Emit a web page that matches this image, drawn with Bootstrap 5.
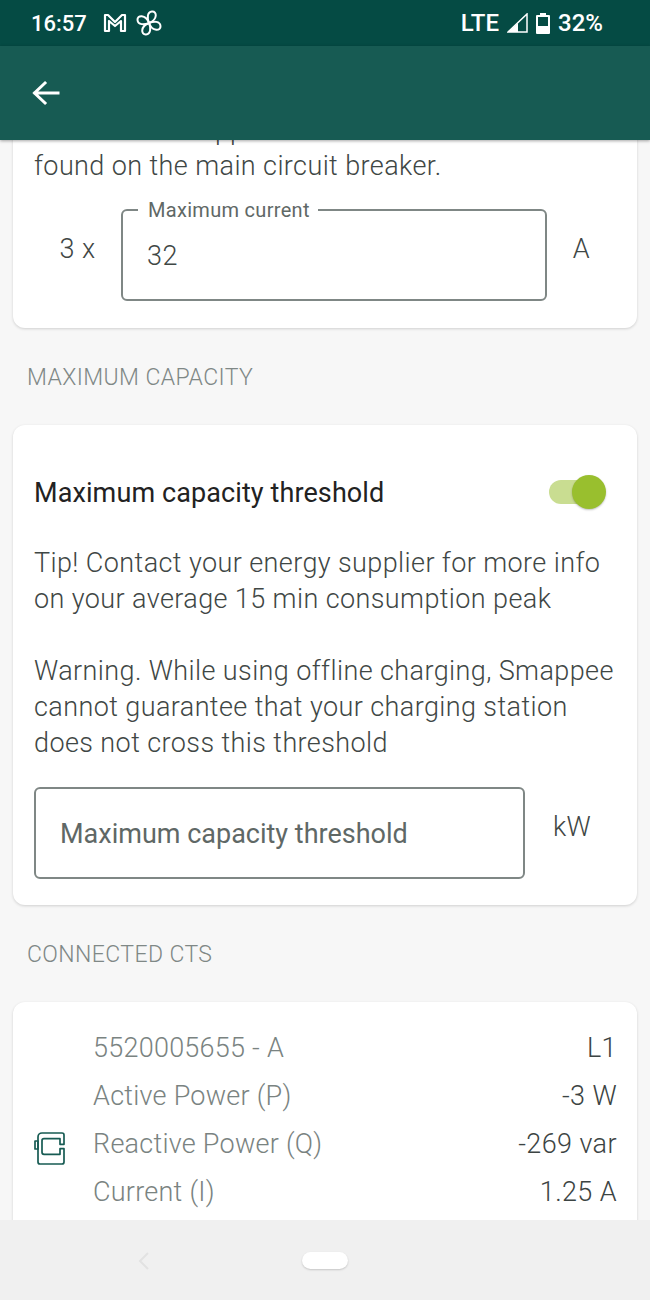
<!DOCTYPE html>
<html lang="en">
<head>
<meta charset="utf-8">
<title>Settings</title>
<link rel="stylesheet" href="https://cdn.jsdelivr.net/npm/bootstrap@5.3.0/dist/css/bootstrap.min.css">
<style>
html,body{height:1300px;overflow:hidden}
body{background:#f7f7f7;font-family:Roboto,"Liberation Sans",sans-serif;font-weight:300;letter-spacing:.4px;color:#3c4443}
.phone{height:1300px}
.status-strip{height:46px;background:#054b44;color:#fff;font-size:22px;font-weight:500;letter-spacing:0;padding:0 47px 0 31px}
.status-right{font-size:24px}
.app-strip{height:94px;background:#175b53;padding-left:32px;box-shadow:0 1px 3px rgba(0,0,0,.35);z-index:2}
.scroller{overflow:hidden;min-height:0}
.panel{background:#fff;border-radius:12px;margin:0 13px;box-shadow:0 1px 3px rgba(0,0,0,.16)}
.panel-one{height:251px;margin-top:-63px;padding:35px 21px 0}
.clipped-line{letter-spacing:.1px}
.body-line{font-size:27px;line-height:36px;margin:0;color:#3f4745;white-space:nowrap}
.head-line{font-weight:400;letter-spacing:.1px;color:#222}
.sect-title{font-size:23px;font-weight:300;line-height:30px;color:#7f8886;margin:0;padding:35px 27px 32px}
.unit{font-size:27px;color:#3f4745}
.outlined{border:2px solid #7f8785;border-radius:6px;height:92px;font-size:27px;color:#3f4745;padding-top:2px}
.hint-text{font-weight:400;letter-spacing:0;color:#5f6866}
.outlined-label{position:absolute;left:15px;top:-13px;background:#fff;padding:0 8px 0 10px;font-size:20px;font-weight:400;letter-spacing:.3px;line-height:24px;color:#5f6866}
.panel-two{height:480px;padding:0 21px}
.head-row{height:120px;padding-top:16px}
.sw-track{width:56px;height:24px;border-radius:12px;background:#c9dd91;position:relative;margin:-2px 11px 0 0}
.sw-knob{position:absolute;right:-1px;top:-5px;width:34px;height:34px;border-radius:50%;background:#99bf2e;box-shadow:0 1px 2px rgba(0,0,0,.25)}
.panel-three{height:300px}
.ct-col{width:80px;padding:129px 0 0 21px}
.grey-val{color:#7a8381;letter-spacing:.25px}
.tbl-wrap{padding:22px 20px 0 0}
.tbl-row{height:48px;font-size:27px;line-height:48px}
.nav-strip{height:80px;background:#f0f0f0;z-index:2}
.pill-btn{width:46px;height:17px;border-radius:9px;background:#fff;box-shadow:0 1px 2px rgba(0,0,0,.18)}
.back-tri{left:138px;top:32px}
</style>
</head>
<body>
<div class="phone d-flex flex-column">
  <div class="status-strip d-flex align-items-center justify-content-between flex-shrink-0">
    <div class="d-flex align-items-center">
      <span>16:57</span>
      <svg class="ms-3" width="24" height="20" viewBox="0 0 24 20" fill="none" stroke="#fff" stroke-width="2.200" stroke-linejoin="round"><path d="M2 2h3l7 7 7-7h3v16h-4V8l-6 5-6-5v10H2z"/></svg>
      <svg class="ms-2" width="28" height="28" viewBox="0 0 28 28" fill="none" stroke="#fff" stroke-width="2" stroke-linejoin="round"><g id="fan"><path d="M14 14C12 9 12 3 17 2.500c5-.5 6 8-3 11.500z"/><path transform="rotate(90 14 14)" d="M14 14C12 9 12 3 17 2.500c5-.5 6 8-3 11.500z"/><path transform="rotate(180 14 14)" d="M14 14C12 9 12 3 17 2.500c5-.5 6 8-3 11.500z"/><path transform="rotate(270 14 14)" d="M14 14C12 9 12 3 17 2.500c5-.5 6 8-3 11.500z"/></g></svg>
    </div>
    <div class="status-right d-flex align-items-center">
      <span>LTE</span>
      <svg class="ms-2" width="21" height="20" viewBox="0 0 21 20"><path d="M20 1v18H1z" fill="none" stroke="#fff" stroke-width="1.500"/><path d="M11 10v9H1z" fill="#fff"/></svg>
      <svg class="ms-2" width="14" height="21" viewBox="0 0 14 21"><path d="M4 0h6v2h3a1 1 0 0 1 1 1v17a1 1 0 0 1-1 1H1a1 1 0 0 1-1-1V3a1 1 0 0 1 1-1h3z" fill="#fff"/><path d="M2 4h10v9H2z" fill="#054b44"/></svg>
      <span class="ms-2">32%</span>
    </div>
  </div>
  <div class="app-strip d-flex align-items-center flex-shrink-0">
    <svg width="28" height="26" viewBox="0 0 28 26" fill="none" stroke="#fff" stroke-width="3" stroke-linecap="square"><path d="M26 13H3M13 3 2.500 13 13 23"/></svg>
  </div>
  <main class="scroller flex-grow-1">
    <section class="panel panel-one">
      <p class="body-line"><span class="clipped-line">The value of supplied current can be</span><br>found on the main circuit breaker.</p>
      <div class="d-flex" style="margin-top:25px">
        <div class="unit text-center" style="width:87px;line-height:80px">3 x</div>
        <div class="outlined position-relative flex-grow-1 d-flex align-items-center ps-4">
          <span class="outlined-label">Maximum current</span>
          32
        </div>
        <div class="unit text-center" style="width:69px;line-height:80px">A</div>
      </div>
    </section>
    <h2 class="sect-title">MAXIMUM CAPACITY</h2>
    <section class="panel panel-two">
      <div class="head-row d-flex align-items-center justify-content-between">
        <span class="body-line head-line">Maximum capacity threshold</span>
        <div class="sw-track"><div class="sw-knob"></div></div>
      </div>
      <p class="body-line mb-0">Tip! Contact your energy supplier for more info<br>on your average 15 min consumption peak</p>
      <p class="body-line" style="margin-top:36px">Warning. While using offline charging, Smappee<br>cannot guarantee that your charging station<br>does not cross this threshold</p>
      <div class="d-flex" style="margin-top:26px">
        <div class="outlined hint-text flex-grow-1 d-flex align-items-center ps-4">Maximum capacity threshold</div>
        <div class="unit text-center" style="width:91px;padding-left:3px;line-height:80px">kW</div>
      </div>
    </section>
    <h2 class="sect-title">CONNECTED CTS</h2>
    <section class="panel panel-three d-flex">
      <div class="ct-col">
        <svg width="32" height="36" viewBox="0 0 32 36" fill="none" stroke="#175b53" stroke-width="1.700" stroke-linejoin="round"><path d="M4 6a4 4 0 0 1 4-4h20a2 2 0 0 1 2 2v9.300h-4V7.700H10a2 2 0 0 0-2 2v11.600a2 2 0 0 0 2 2h16v-5.600h4V31a2 2 0 0 1-2 2H6a2 2 0 0 1-2-2z"/><path d="M1 10h3v8H1z"/></svg>
      </div>
      <div class="tbl-wrap flex-grow-1">
        <div class="tbl-row d-flex justify-content-between"><span class="grey-val">5520005655 - A</span><span>L1</span></div>
        <div class="tbl-row d-flex justify-content-between"><span class="grey-val">Active Power (P)</span><span>-3 W</span></div>
        <div class="tbl-row d-flex justify-content-between"><span class="grey-val">Reactive Power (Q)</span><span>-269 var</span></div>
        <div class="tbl-row d-flex justify-content-between"><span class="grey-val">Current (I)</span><span>1.25 A</span></div>
      </div>
    </section>
  </main>
  <div class="nav-strip d-flex align-items-center justify-content-center flex-shrink-0 position-relative">
    <svg class="position-absolute back-tri" width="12" height="18" viewBox="0 0 12 18" fill="none" stroke="#e2e2e2" stroke-width="2"><path d="M10 1 2 9l8 8"/></svg>
    <div class="pill-btn"></div>
  </div>
</div>
<script src="https://cdn.jsdelivr.net/npm/bootstrap@5.3.0/dist/js/bootstrap.bundle.min.js"></script>
</body>
</html>
